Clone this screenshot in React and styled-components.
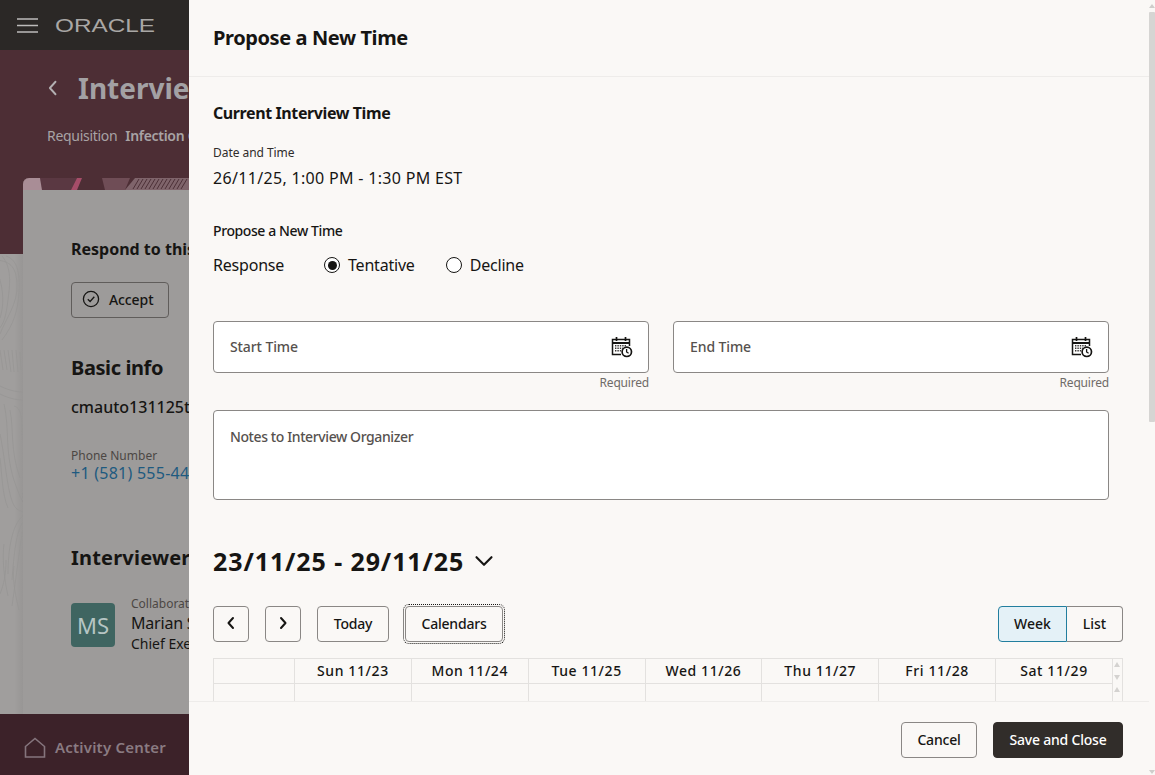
import React from "react";
import styled, { createGlobalStyle } from "styled-components";

const Global = createGlobalStyle`
  html, body { margin: 0; padding: 0; height: 100%; overflow: hidden; background: #faf8f6; }
  * { box-sizing: border-box; }
  body { font-family: "Noto Sans", "Open Sans", sans-serif; color: #161513; }
`;

const Viewport = styled.div`
  position: relative;
  width: 1155px;
  height: 775px;
  overflow: hidden;
  white-space: nowrap;
`;

/* ---------- dimmed page behind the drawer ---------- */
const Page = styled.div`
  display: flex;
  flex-direction: column;
  height: 100%;
  background: #9f9d9c;
`;
const TopBar = styled.header`
  flex: 0 0 50px;
  display: flex;
  align-items: center;
  gap: 17px;
  padding-left: 17px;
  background: #2b2826;
`;
const Main = styled.main`
  position: relative;
  flex: 1;
  min-height: 0;
  overflow: hidden;
  padding: 0 23px;
  background: linear-gradient(#4d2e35 0 204px, #a09e9d 204px);
`;
const TitleRow = styled.div`
  display: flex;
  align-items: center;
  gap: 15px;
  height: 38px;
  margin: 19px 0 0 20px;
`;
const PageTitle = styled.h1`
  margin: 0;
  font-size: 28px;
  line-height: 38px;
  font-weight: 700;
  color: #a3a1a4;
`;
const ReqLine = styled.div`
  display: flex;
  gap: 8px;
  margin: 19px 0 0 24px;
  font-size: 14px;
  line-height: 20px;
  letter-spacing: -0.3px;
  color: #a8a3a5;
  b { font-weight: 600; }
`;
const Card = styled.section`
  position: relative;
  margin-top: 32px;
  height: 540px;
  padding: 12px 0 0;
  background: #9d9b9a;
  border-radius: 6px 6px 0 0;
  overflow: hidden;
`;
const CardBody = styled.div`
  padding: 47px 48px 0;
`;
const Respond = styled.h3`
  margin: 0;
  font-size: 16px;
  line-height: 24px;
  font-weight: 700;
`;
const GhostBtn = styled.div`
  display: inline-flex;
  align-items: center;
  gap: 9px;
  width: 98px;
  height: 36px;
  margin: 21px 0 0;
  padding: 0 0 2px 10px;
  border: 1px solid #605d5b;
  border-radius: 4px;
  font-size: 14px;
  font-weight: 500;
  letter-spacing: -0.1px;
`;
const CardH2 = styled.h2`
  margin: ${(p) => p.$top}px 0 0;
  font-size: 20px;
  line-height: 28px;
  font-weight: 700;
  letter-spacing: ${(p) => p.$ls || 0}px;
`;
const Candidate = styled.div`
  margin-top: 13px;
  font-size: 16px;
  line-height: 24px;
  font-weight: 500;
`;
const SmallLabel = styled.div`
  margin-top: ${(p) => p.$top || 0}px;
  font-size: 12px;
  line-height: 16px;
  color: #4c4744;
`;
const PhoneLink = styled.div`
  font-size: 16px;
  line-height: 18px;
  letter-spacing: 0.25px;
  color: #1e5a80;
`;
const Person = styled.div`
  display: flex;
  gap: 16px;
  margin-top: 24px;
`;
const Avatar = styled.div`
  flex: 0 0 44px;
  height: 44px;
  margin-top: 7px;
  display: flex;
  align-items: center;
  justify-content: center;
  border-radius: 4px;
  background: #3f6561;
  color: #b6c5c4;
  font-size: 22px;
`;
const PersonName = styled.div`
  font-size: 16px;
  line-height: 22px;
  letter-spacing: -0.2px;
`;
const PersonRole = styled.div`
  font-size: 14px;
  line-height: 20px;
`;
const BottomBar = styled.footer`
  flex: 0 0 61px;
  display: flex;
  align-items: center;
  gap: 9px;
  padding: 5px 0 0 24px;
  background: #3c2229;
  color: #8a7b82;
  font-size: 15px;
  font-weight: 600;
  letter-spacing: 0.2px;
`;
const Contours = styled.svg`
  position: absolute;
  left: 0;
  top: 204px;
  background: linear-gradient(90deg, transparent 14px, rgba(0, 0, 0, 0.05) 23px);
`;
const CardStrip = styled.svg`
  position: absolute;
  left: 0;
  top: 0;
`;

/* ---------- drawer ---------- */
const Drawer = styled.aside`
  position: absolute;
  inset: 0 0 0 189px;
  display: flex;
  flex-direction: column;
  background: #faf8f6;
`;
const DrawerHead = styled.div`
  flex: 0 0 77px;
  display: flex;
  align-items: center;
  padding: 0 24px 1px;
  margin-right: 6px;
  border-bottom: 1px solid #eeecea;
`;
const DrawerTitle = styled.h1`
  margin: 0;
  font-size: 20px;
  line-height: 28px;
  font-weight: 700;
  letter-spacing: -0.4px;
`;
const DrawerBody = styled.div`
  flex: 1;
  min-height: 0;
  overflow: hidden;
  padding: 24px 32px 0 24px;
`;
const SectionTitle = styled.h2`
  margin: 0;
  font-size: 16px;
  line-height: 24px;
  font-weight: 700;
  letter-spacing: -0.4px;
`;
const FieldLabel = styled.div`
  margin-top: 20px;
  font-size: 12px;
  line-height: 16px;
  letter-spacing: -0.05px;
  color: #2f2c2a;
`;
const FieldValue = styled.div`
  margin-top: 5px;
  font-size: 16px;
  line-height: 24px;
  letter-spacing: 0.32px;
`;
const GroupTitle = styled.h3`
  margin: 31px 0 0;
  font-size: 14px;
  line-height: 20px;
  font-weight: 500;
  letter-spacing: -0.4px;
`;
const ResponseRow = styled.div`
  display: flex;
  align-items: center;
  height: 24px;
  margin-top: 12px;
  font-size: 16px;
  letter-spacing: -0.2px;
`;
const ResponseLabel = styled.span`
  width: 111px;
`;
const RadioOption = styled.label`
  display: flex;
  align-items: center;
  gap: 8px;
  margin-left: ${(p) => p.$ml || 0}px;
  margin-right: 32px;
`;
const RadioMark = styled.span`
  position: relative;
  width: 16px;
  height: 16px;
  border: 1.5px solid #161513;
  border-radius: 50%;
  background: #fff;
  &::after {
    content: "";
    display: ${(p) => (p.$on ? "block" : "none")};
    position: absolute;
    inset: 2.5px;
    border-radius: 50%;
    background: #161513;
  }
`;
const TimeRow = styled.div`
  display: grid;
  grid-template-columns: 436px 436px;
  column-gap: 24px;
  margin-top: 44px;
`;
const InputBox = styled.div`
  display: flex;
  align-items: center;
  justify-content: space-between;
  height: 52px;
  padding: 0 15px 1px 16px;
  background: #fff;
  border: 1px solid #8a8785;
  border-radius: 4px;
  font-size: 14px;
  font-weight: 500;
  letter-spacing: -0.1px;
  color: #56514e;
`;
const Required = styled.div`
  margin-top: 2px;
  text-align: right;
  font-size: 12px;
  line-height: 16px;
  letter-spacing: -0.2px;
  color: #6f6b68;
`;
const NotesBox = styled.div`
  width: 896px;
  height: 90px;
  margin-top: 19px;
  padding: 16px;
  background: #fff;
  border: 1px solid #8a8785;
  border-radius: 4px;
  font-size: 14px;
  line-height: 20px;
  font-weight: 500;
  letter-spacing: -0.4px;
  color: #56514e;
`;
const RangeRow = styled.div`
  display: flex;
  align-items: center;
  gap: 10px;
  height: 34px;
  margin-top: 44px;
`;
const RangeTitle = styled.h2`
  margin: 0;
  font-size: 25px;
  line-height: 34px;
  font-weight: 700;
  letter-spacing: 0.9px;
`;
const Toolbar = styled.div`
  display: flex;
  align-items: center;
  margin-top: 28px;
`;
const Button = styled.button`
  display: inline-flex;
  align-items: center;
  justify-content: center;
  width: ${(p) => p.$w}px;
  height: 36px;
  margin-right: ${(p) => p.$gap || 0}px;
  padding: 0 0 2px;
  background: transparent;
  border: 1px solid #8a8785;
  border-radius: 4px;
  color: #161513;
  font: 500 14px "Noto Sans", sans-serif;
  letter-spacing: -0.2px;
  ${(p) => p.$focus && `outline: 1px dotted #161513; outline-offset: 1px;`}
`;
const Segments = styled.div`
  display: flex;
  margin-left: auto;
`;
const Segment = styled.div`
  display: flex;
  align-items: center;
  justify-content: center;
  width: ${(p) => p.$w}px;
  height: 36px;
  padding-bottom: 2px;
  font-size: 14px;
  font-weight: 500;
  border: 1px solid ${(p) => (p.$on ? "#227e9e" : "#8a8785")};
  border-left-width: ${(p) => (p.$on ? 1 : 0)}px;
  border-radius: ${(p) => (p.$on ? "4px 0 0 4px" : "0 4px 4px 0")};
  background: ${(p) => (p.$on ? "#e4f1f7" : "transparent")};
`;
const Calendar = styled.div`
  position: relative;
  display: grid;
  grid-template-columns: 81px repeat(7, 116.85px) 1fr;
  grid-template-rows: 25px 18px;
  height: 43px;
  margin-top: 16px;
  border-top: 1px solid #e3e1df;
  border-left: 1px solid #e3e1df;
  border-right: 1px solid #e3e1df;
`;
const HeadCell = styled.div`
  display: flex;
  align-items: center;
  justify-content: center;
  padding-bottom: 2px;
  border-right: 1px solid #e3e1df;
  border-bottom: 1px solid #e3e1df;
  font-size: 14px;
  font-weight: 500;
  letter-spacing: 0.6px;
`;
const BodyCell = styled.div`
  border-right: 1px solid #e3e1df;
`;
const MiniArrow = styled.span`
  position: absolute;
  right: 2px;
  top: ${(p) => p.$top}px;
  width: 0;
  height: 0;
  border-left: 3.5px solid transparent;
  border-right: 3.5px solid transparent;
  ${(p) => (p.$down ? "border-top" : "border-bottom")}: 5px solid #d4d2d0;
`;
const DrawerFoot = styled.div`
  flex: 0 0 74px;
  display: flex;
  align-items: flex-start;
  justify-content: flex-end;
  gap: 16px;
  padding: 20px 26px 0 0;
  margin-right: 6px;
  border-top: 1px solid #eeecea;
`;
const PrimaryButton = styled(Button)`
  background: #312d2a;
  border-color: #312d2a;
  color: #fff;
`;
const ScrollThumb = styled.div`
  position: absolute;
  right: 0;
  top: 12px;
  width: 6px;
  height: 410px;
  background: #d6d5d3;
  border-radius: 1px;
`;
const ScrollArrow = styled.span`
  position: absolute;
  right: 0;
  ${(p) => (p.$down ? "bottom: 1px;" : "top: 4px;")}
  width: 0;
  height: 0;
  border-left: 3px solid transparent;
  border-right: 3px solid transparent;
  ${(p) => (p.$down ? "border-top" : "border-bottom")}: 4px solid #cfcdcb;
`;

const Chevron = ({ dir = "left", size = 16, color = "#161513", w = 2 }) => (
  <svg width={size} height={size} viewBox="0 0 16 16" fill="none" stroke={color} strokeWidth={w} strokeLinecap="round" strokeLinejoin="round">
    {dir === "left" && <path d="M10 3 L5.5 8 L10 13" />}
    {dir === "right" && <path d="M6 3 L10.5 8 L6 13" />}
    {dir === "down" && <path d="M2 5 L8 11 L14 5" />}
  </svg>
);

const CalendarClock = () => (
  <svg width="22" height="22" viewBox="0 0 22 22" fill="none" stroke="#161513" strokeWidth="1.5">
    <path d="M10 18.5H1.5V3.5H18.5V10" />
    <path d="M1.5 7H18.5" strokeWidth="2" />
    <path d="M5.5 1V5M14.5 1V5" strokeWidth="1.7" />
    <path d="M4 9.7h12M4 12.2h8M4 14.7h6" strokeWidth="1.4" strokeDasharray="1.4 1" stroke="#3a3634" />
    <circle cx="15.8" cy="15.8" r="4.7" fill="#fff" strokeWidth="1.7" />
    <path d="M15.6 13v3l2 1.2" strokeWidth="1.3" />
  </svg>
);

const contourPaths = [
  "M-2 6C8 8 16 10 17 30S6 64 0 80",
  "M2 2C12 14 10 30 8 46S4 70 -2 76",
  "M6 2C18 6 20 20 19 38S14 70 2 86",
  "M-2 20C4 36 4 52 0 64",
  "M0 96L3 116M4 96L7 116M8 96L11 118M12 96L14 118M16 96L18 118M20 98L21 116",
  "M0 132C8 136 16 138 23 138M0 140C8 144 16 146 23 146",
  "M4 150C10 176 4 200 16 232S22 236 23 240",
  "M10 156C14 176 10 196 20 224",
  "M14 152C23 154 22 170 22 186",
  "M0 180C4 198 6 224 10 240S18 256 23 258",
  "M0 204C2 220 2 240 8 254",
  "M23 262C12 270 8 296 8 320",
  "M23 268C16 278 14 300 12 326",
  "M23 276C20 290 18 310 12 352",
  "M4 290C2 304 4 324 8 342",
  "M14 312C12 326 16 344 19 356",
  "M0 340C4 330 6 320 6 306",
];

export default function App() {
  return (
    <Viewport>
      <Global />
      <Page>
        <TopBar>
          <svg width="21" height="15" viewBox="0 0 21 15" stroke="#bdbbba" strokeWidth="1.6">
            <path d="M0 1h21M0 7.5h21M0 14h21" />
          </svg>
          <svg width="101" height="20" viewBox="0 0 101 20">
            <text x="0" y="16.5" fontFamily="Liberation Sans, sans-serif" fontSize="18" fill="#a9a7a5" textLength="100" lengthAdjust="spacingAndGlyphs">ORACLE</text>
          </svg>
        </TopBar>
        <Main>
          <Contours width="23" height="460" viewBox="0 0 23 460" fill="none" stroke="#979594" strokeWidth="0.8">
            {contourPaths.map((d) => <path key={d} d={d} />)}
          </Contours>
          <TitleRow>
            <Chevron size={20} color="#b3b0b2" w={1.5} />
            <PageTitle>Interview Details</PageTitle>
          </TitleRow>
          <ReqLine>
            <span>Requisition</span>
            <b>Infection Control Nurse</b>
          </ReqLine>
          <Card>
            <CardStrip width="166" height="12" viewBox="0 0 166 12">
              <rect width="166" height="12" fill="#4d2e35" />
              <path d="M17 0H54L48 12H19Z" fill="#5a3842" />
              <path d="M0 0H17L19 12H0Z" fill="#a98d96" />
              <path d="M54 0H59L54 12H48Z" fill="#a64d69" />
              <path d="M79 0H107L102 12H82Z" fill="#6f4d56" />
              <path d="M102 12L112 0H166V12Z" fill="#7f646b" />
              <path d="M110 11L116 1M114 11L120 1M118 11L124 1M122 11L128 1M126 11L132 1M130 11L136 1M134 11L140 1M138 11L144 1M142 11L148 1M146 11L152 1M150 11L156 1M154 11L160 1M158 11L164 1" stroke="#4d3037" strokeWidth="1" />
            </CardStrip>
            <CardBody>
              <Respond>Respond to this interview</Respond>
              <GhostBtn>
                <svg width="18" height="18" viewBox="0 0 18 18" fill="none" stroke="#161513" strokeWidth="1.3">
                  <circle cx="9" cy="9" r="7.6" />
                  <path d="M5.8 9.2l2.3 2.3 4.2-4.8" />
                </svg>
                Accept
              </GhostBtn>
              <CardH2 $top={36} $ls={-0.4}>Basic info</CardH2>
              <Candidate>cmauto131125test</Candidate>
              <SmallLabel $top={29}>Phone Number</SmallLabel>
              <PhoneLink>+1 (581) 555-4400</PhoneLink>
              <CardH2 $top={62} $ls={0.2}>Interviewers</CardH2>
              <Person>
                <Avatar>MS</Avatar>
                <div>
                  <SmallLabel>Collaborator</SmallLabel>
                  <PersonName>Marian Smith</PersonName>
                  <PersonRole>Chief Executive</PersonRole>
                </div>
              </Person>
            </CardBody>
          </Card>
        </Main>
        <BottomBar>
          <svg width="22" height="21" viewBox="0 0 22 21" fill="none" stroke="#85757d" strokeWidth="1.6">
            <path d="M1.5 20V9.5L11 1.5l9.5 8V20Z" />
          </svg>
          Activity Center
        </BottomBar>
      </Page>

      <Drawer>
        <DrawerHead>
          <DrawerTitle>Propose a New Time</DrawerTitle>
        </DrawerHead>
        <DrawerBody>
          <SectionTitle>Current Interview Time</SectionTitle>
          <FieldLabel>Date and Time</FieldLabel>
          <FieldValue>26/11/25, 1:00 PM - 1:30 PM EST</FieldValue>
          <GroupTitle>Propose a New Time</GroupTitle>
          <ResponseRow>
            <ResponseLabel>Response</ResponseLabel>
            <RadioOption><RadioMark $on />Tentative</RadioOption>
            <RadioOption $ml={-1}><RadioMark />Decline</RadioOption>
          </ResponseRow>
          <TimeRow>
            <div>
              <InputBox>Start Time<CalendarClock /></InputBox>
              <Required>Required</Required>
            </div>
            <div>
              <InputBox>End Time<CalendarClock /></InputBox>
              <Required>Required</Required>
            </div>
          </TimeRow>
          <NotesBox>Notes to Interview Organizer</NotesBox>
          <RangeRow>
            <RangeTitle>23/11/25 - 29/11/25</RangeTitle>
            <Chevron dir="down" size={20} w={1.7} />
          </RangeRow>
          <Toolbar>
            <Button $w={36} $gap={16}><Chevron /></Button>
            <Button $w={36} $gap={16}><Chevron dir="right" /></Button>
            <Button $w={72} $gap={16}>Today</Button>
            <Button $w={98} $focus>Calendars</Button>
            <Segments>
              <Segment $w={69} $on>Week</Segment>
              <Segment $w={56}>List</Segment>
            </Segments>
          </Toolbar>
          <Calendar>
            <HeadCell />
            {["Sun 11/23", "Mon 11/24", "Tue 11/25", "Wed 11/26", "Thu 11/27", "Fri 11/28", "Sat 11/29"].map((d) => (
              <HeadCell key={d}>{d}</HeadCell>
            ))}
            <div />
            {Array.from({ length: 8 }, (_, i) => <BodyCell key={i} />)}
            <div />
            <MiniArrow $top={3} />
            <MiniArrow $top={16} $down />
            <MiniArrow $top={28} />
          </Calendar>
        </DrawerBody>
        <DrawerFoot>
          <Button $w={76}>Cancel</Button>
          <PrimaryButton $w={130}>Save and Close</PrimaryButton>
        </DrawerFoot>
        <ScrollArrow />
        <ScrollThumb />
        <ScrollArrow $down />
      </Drawer>
    </Viewport>
  );
}
